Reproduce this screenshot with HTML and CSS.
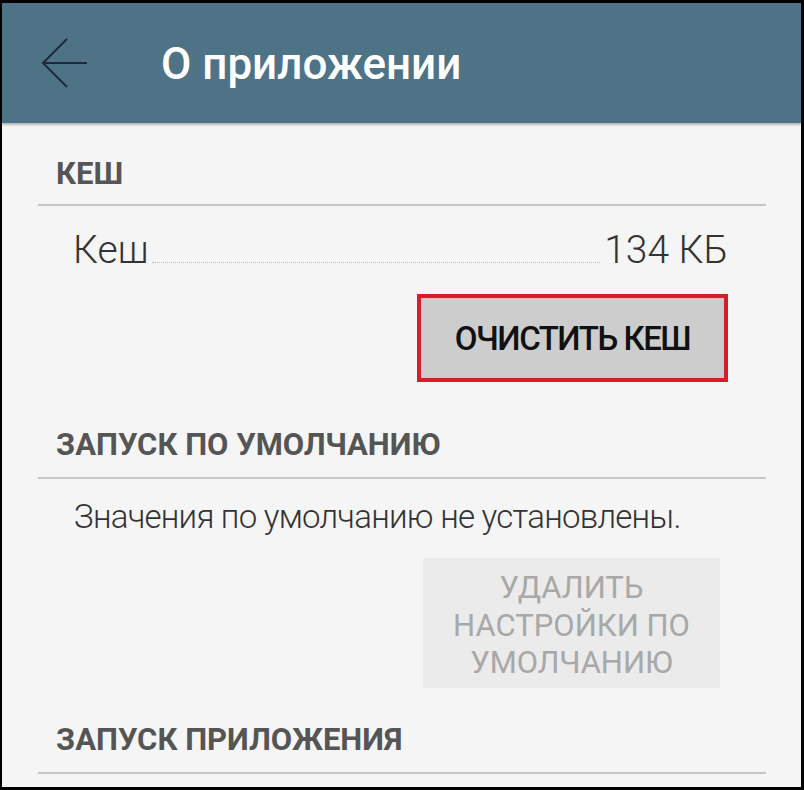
FILE: index.html
```html
<!DOCTYPE html>
<html lang="ru">
<head>
<meta charset="utf-8">
<title>О приложении</title>
<link rel="stylesheet" href="styles.css">
</head>
<body>
<div class="screen">
  <header class="appbar">
    <svg class="back" width="50" height="52" viewBox="0 0 50 52" aria-hidden="true">
      <path d="M27 2 L3 26 L27 50 M3 26 H47" fill="none" stroke="#1b2b3c" stroke-width="2"/>
    </svg>
    <h1 class="title">О приложении</h1>
  </header>
  <main class="content">
    <section class="group">
      <h2 class="group-title">КЕШ</h2>
      <div class="kv">
        <span class="kv-label">Кеш</span>
        <span class="kv-leader"></span>
        <span class="kv-value">134 КБ</span>
      </div>
      <div class="actions">
        <button class="btn btn-highlight">ОЧИСТИТЬ КЕШ</button>
      </div>
    </section>
    <section class="group group-spaced">
      <h2 class="group-title">ЗАПУСК ПО УМОЛЧАНИЮ</h2>
      <p class="note">Значения по умолчанию не установлены.</p>
      <div class="actions actions-inset">
        <button class="btn btn-disabled" disabled>УДАЛИТЬ<br>НАСТРОЙКИ ПО<br>УМОЛЧАНИЮ</button>
      </div>
    </section>
    <section class="group group-last">
      <h2 class="group-title">ЗАПУСК ПРИЛОЖЕНИЯ</h2>
    </section>
  </main>
</div>
</body>
</html>
```

FILE: styles.css
```css
* { box-sizing: border-box; }

html, body {
  margin: 0;
  padding: 0;
  background: #000;
}

body {
  width: 804px;
  height: 790px;
  overflow: hidden;
  font-family: Roboto, "Noto Sans", "Liberation Sans", sans-serif;
}

.screen {
  margin: 3px 3px 3px 2px;
  height: 784px;
  background: #f5f5f5;
  overflow: hidden;
}

.appbar {
  height: 120px;
  background: #4e7386;
  display: flex;
  align-items: center;
  padding-left: 38px;
  box-shadow: 0 2px 2px rgba(0, 0, 0, 0.25);
  position: relative;
}

.back {
  display: block;
  flex: none;
}

.title {
  margin: 2px 0 0 71px;
  font-size: 44px;
  line-height: 41px;
  font-weight: 500;
  color: #ffffff;
}

.content {
  padding: 0 35px 0 36px;
}

.group-title {
  margin: 0;
  padding: 36px 0 16px 18px;
  font-size: 31px;
  line-height: 29px;
  font-weight: 700;
  color: #555555;
  border-bottom: 2px solid #c6c6c6;
}

.group-spaced .group-title { padding-top: 48px; padding-bottom: 18px; }
.group-last .group-title { padding-top: 37px; padding-bottom: 18px; }

.kv {
  display: flex;
  align-items: baseline;
  margin-top: 25px;
  padding: 0 38px 0 35px;
  font-size: 39px;
  line-height: 38px;
  font-weight: 300;
  color: #333333;
}

.kv-leader {
  flex: 1;
  height: 0;
  margin: 0 4px 0 3px;
  border-bottom: 1px dotted #bdbdbd;
}

.actions {
  display: flex;
  justify-content: flex-end;
  margin-top: 25px;
  padding-right: 38px;
}

.actions-inset {
  margin-top: 23px;
  padding-right: 46px;
}

.btn {
  font-family: inherit;
  border: none;
  margin: 0;
  text-align: center;
}

.btn-highlight {
  width: 311px;
  height: 88px;
  border: 4px solid #d2202b;
  box-shadow: inset 0 0 0 1px #efb9bb;
  background: #cdcdcd;
  color: #111111;
  font-size: 33px;
  font-weight: 500;
  letter-spacing: -1.5px;
  padding: 0;
}

.btn-disabled {
  width: 297px;
  height: 130px;
  background: #ebebeb;
  color: #a8a8a8;
  font-size: 31px;
  line-height: 37.5px;
  font-weight: 400;
  padding: 11px 0 7px;
}

.note {
  margin: 20px 0 0;
  padding-left: 36px;
  font-size: 33px;
  line-height: 36px;
  font-weight: 300;
  letter-spacing: -0.75px;
  color: #333333;
}
```
